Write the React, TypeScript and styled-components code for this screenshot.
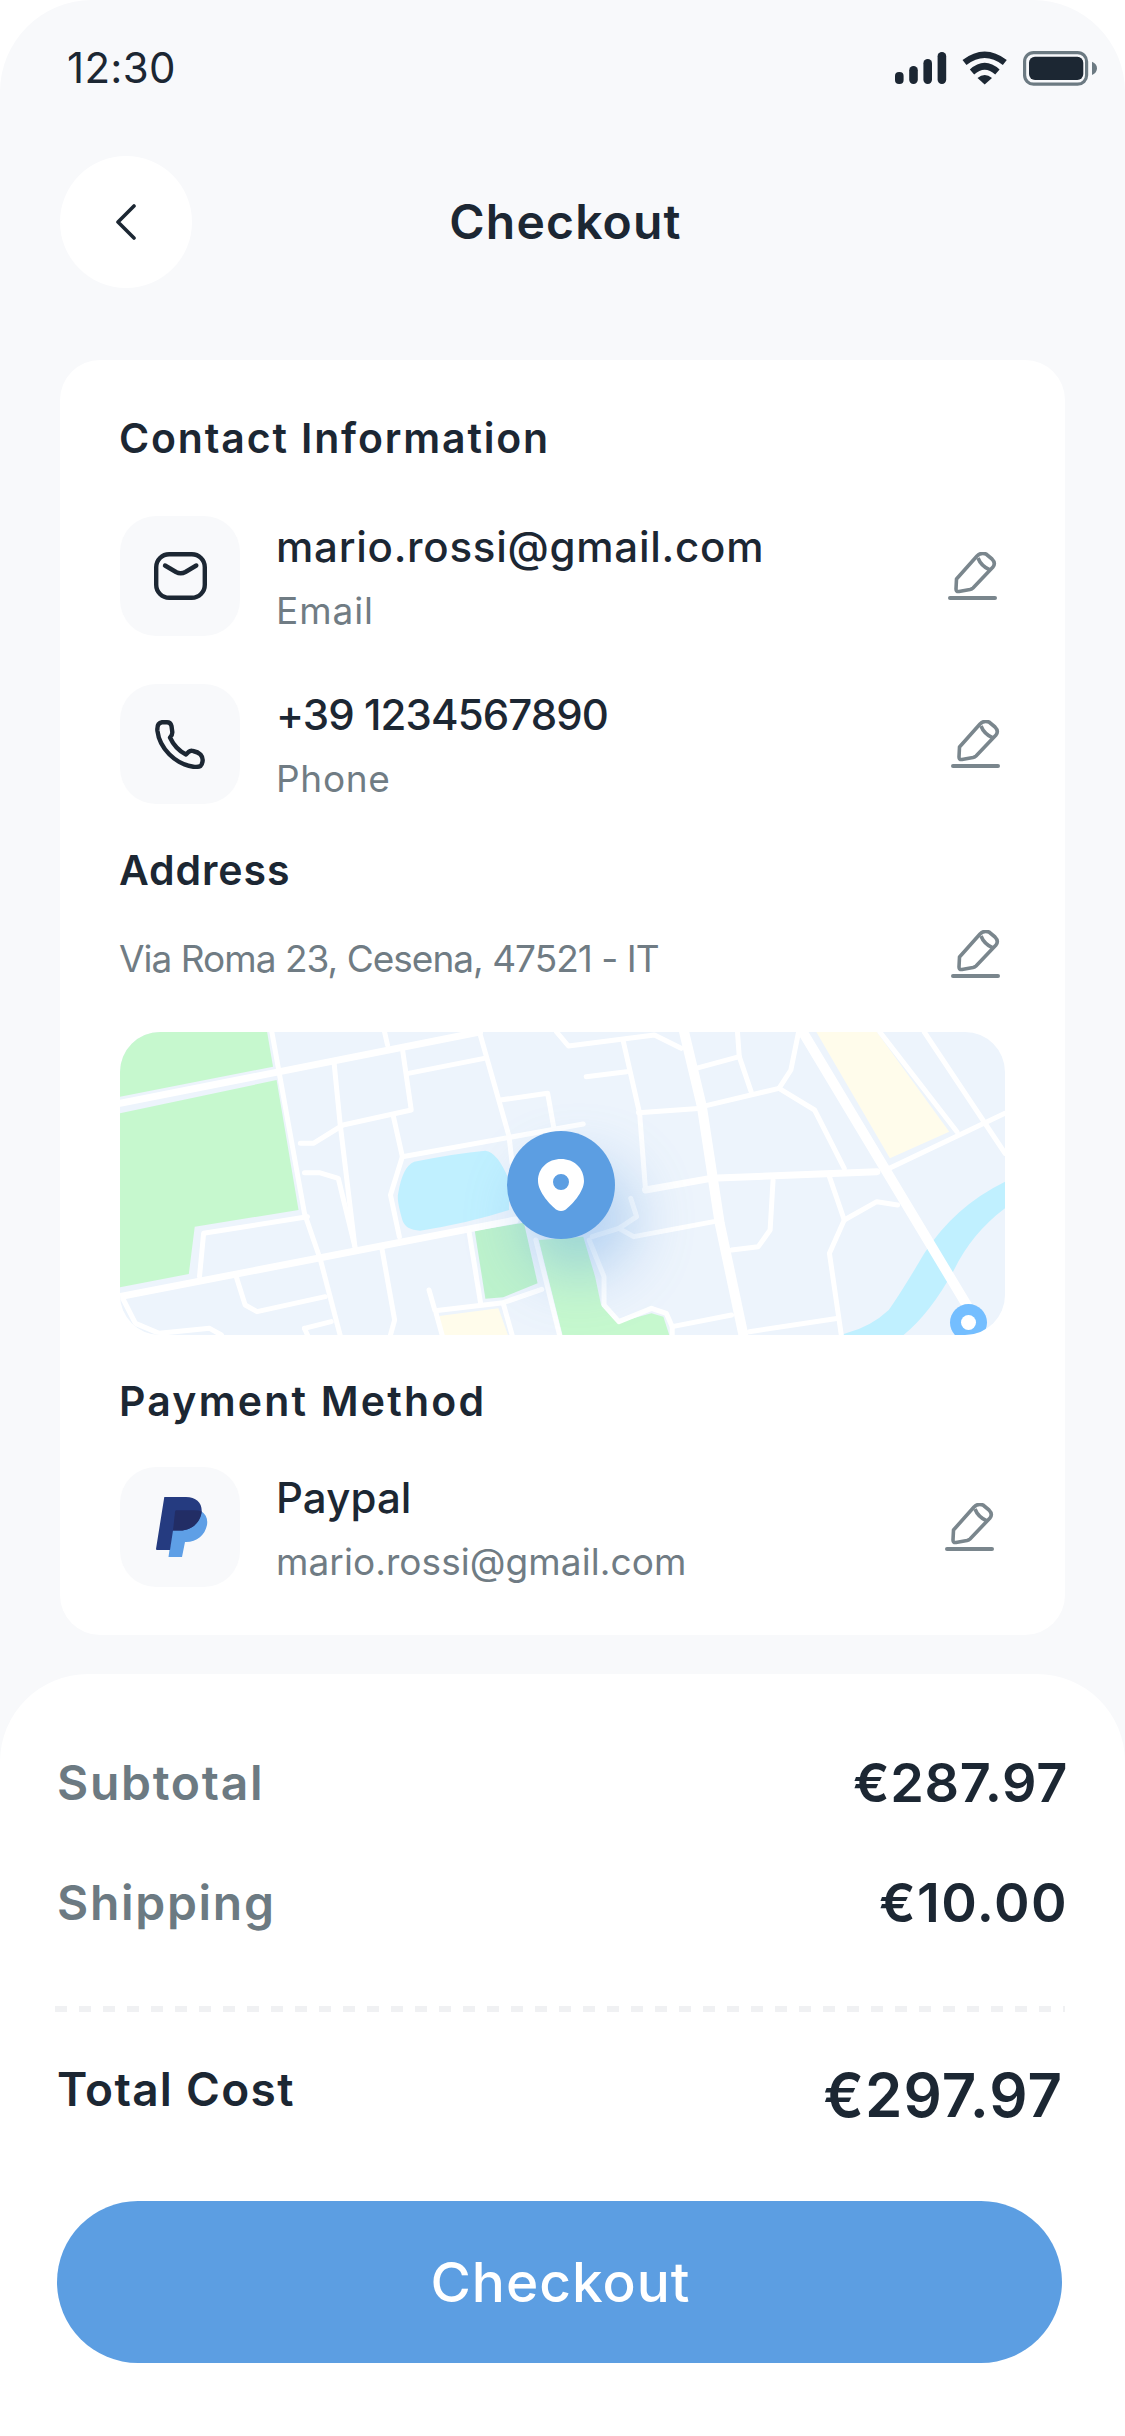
import { createGlobalStyle } from "styled-components";
import styled from "styled-components";

const dark = "#1C2733";
const grey = "#707C84";
const penGrey = "#7A868D";
const blue = "#5C9EE2";
const soft = "#F8F9FB";

const GlobalStyle = createGlobalStyle`
  html, body {
    margin: 0;
    padding: 0;
    background: #fff;
  }
  * {
    box-sizing: border-box;
  }
  body {
    font-family: Inter, "Liberation Sans", sans-serif;
  }
`;

const Screen = styled.div`
  width: 1125px;
  height: 2436px;
  background: ${soft};
  border-radius: 92px 92px 0 0;
  display: flex;
  flex-direction: column;
  overflow: hidden;
`;

const StatusBar = styled.div`
  height: 136px;
  flex: none;
  display: flex;
  align-items: center;
  justify-content: space-between;
  padding: 0 28px 0 67px;
`;

const Time = styled.span`
  font-size: 42px;
  line-height: 50px;
  color: ${dark};
  letter-spacing: 0.3px;
`;

const StatusIcons = styled.div`
  display: flex;
  align-items: center;
  gap: 15px;
`;

const Header = styled.div`
  margin-top: 20px;
  padding: 0 60px;
  display: grid;
  grid-template-columns: 132px 1fr 132px;
  align-items: center;
`;

const BackButton = styled.div`
  width: 132px;
  height: 132px;
  border-radius: 50%;
  background: #fff;
  display: flex;
  align-items: center;
  justify-content: center;
  padding-right: 1px;
`;

const Title = styled.h1`
  margin: 0;
  padding-left: 6px;
  text-align: center;
  font-size: 48px;
  line-height: 60px;
  font-weight: 600;
  color: ${dark};
  letter-spacing: 1.2px;
`;

const Card = styled.section`
  margin: 72px 60px 0;
  height: 1275px;
  flex: none;
  padding: 48px 60px 0;
  background: #fff;
  border-radius: 40px;
`;

const Heading = styled.h2<{ $top?: number; $track: number }>`
  margin: ${(p) => p.$top ?? 0}px 0 0 -1px;
  font-size: 41px;
  line-height: 60px;
  font-weight: 600;
  color: ${dark};
  letter-spacing: ${(p) => p.$track}px;
`;

const Row = styled.div<{ $top: number }>`
  margin-top: ${(p) => p.$top}px;
  height: 120px;
  display: flex;
  align-items: flex-start;
`;

const IconBox = styled.div`
  width: 120px;
  height: 120px;
  flex: none;
  border-radius: 36px;
  background: ${soft};
  display: flex;
  align-items: center;
  justify-content: center;
`;

const RowText = styled.div`
  margin-left: 36px;
  padding-top: 6px;
  flex: 1;
  display: flex;
  flex-direction: column;
  gap: 14px;
`;

const Name = styled.div<{ $track: number }>`
  font-size: 42px;
  line-height: 50px;
  font-weight: 500;
  color: ${dark};
  letter-spacing: ${(p) => p.$track}px;
`;

const Label = styled.div<{ $track: number }>`
  font-size: 37px;
  line-height: 50px;
  color: ${grey};
  letter-spacing: ${(p) => p.$track}px;
`;

const EditIcon = styled.svg<{ $right: number; $top: number }>`
  flex: none;
  width: 49px;
  height: 48px;
  margin: ${(p) => p.$top}px ${(p) => p.$right}px 0 0;
`;

const AddressRow = styled.div`
  margin-top: 29px;
  height: 60px;
  display: flex;
  align-items: center;
  justify-content: space-between;
`;

const AddressText = styled.div`
  margin-left: -1px;
  font-size: 37px;
  line-height: 50px;
  color: ${grey};
  letter-spacing: -0.98px;
`;

const MapBox = styled.div`
  position: relative;
  margin-top: 43px;
  height: 303px;
  border-radius: 40px;
  overflow: hidden;
  background: #edf4fc;
`;

const MapArt = styled.svg`
  display: block;
  width: 885px;
  height: 303px;
`;

const Pin = styled.div`
  position: absolute;
  left: 387px;
  top: 99px;
  width: 108px;
  height: 108px;
  border-radius: 50%;
  background: ${blue};
  display: flex;
  align-items: center;
  justify-content: center;
  box-shadow: 18px 34px 60px rgba(92, 158, 226, 0.42);
`;

const SmallPin = styled.div`
  position: absolute;
  left: 830px;
  top: 272px;
  width: 37px;
  height: 37px;
  border-radius: 50%;
  background: #74beff;
  display: flex;
  align-items: center;
  justify-content: center;
  &::after {
    content: "";
    width: 15px;
    height: 15px;
    border-radius: 50%;
    background: #fff;
  }
`;

const Sheet = styled.section`
  margin-top: 39px;
  flex: 1;
  padding: 79px 57px 0 57px;
  background: #fff;
  border-radius: 88px 88px 0 0;
`;

const SumRow = styled.div<{ $top?: number }>`
  margin-top: ${(p) => p.$top ?? 0}px;
  height: 60px;
  display: flex;
  align-items: center;
  justify-content: space-between;
`;

const SumLabel = styled.span`
  font-size: 48px;
  line-height: 60px;
  font-weight: 600;
  color: #6c7a82;
  letter-spacing: 1.7px;
`;

const SumValue = styled.span<{ $track: number }>`
  font-size: 54px;
  line-height: 60px;
  font-weight: 600;
  color: ${dark};
  letter-spacing: ${(p) => p.$track}px;
`;

const Divider = styled.div`
  margin-top: 73px;
  margin-left: -2px;
  margin-right: 3px;
  height: 6px;
  background: repeating-linear-gradient(90deg, #f0f1f3 0 12px, transparent 12px 24px);
`;

const TotalLabel = styled.span`
  font-size: 46px;
  line-height: 60px;
  font-weight: 600;
  color: ${dark};
  letter-spacing: 1.3px;
  margin-bottom: 6px;
`;

const TotalValue = styled.span`
  font-size: 60px;
  line-height: 60px;
  font-weight: 600;
  color: ${dark};
  letter-spacing: 1px;
  margin: 6px 5px 0 0;
`;

const CheckoutButton = styled.button`
  display: block;
  width: 1005px;
  height: 162px;
  margin-top: 79px;
  border: 0;
  border-radius: 81px;
  background: ${blue};
  color: #fff;
  font-family: inherit;
  font-size: 55px;
  font-weight: 500;
  letter-spacing: 1px;
  padding-right: 4px;
`;

const Signal = () => (
  <svg width="52" height="32" viewBox="0 0 52 32">
    <g fill={dark}>
      <rect x="0" y="20" width="8.6" height="12" rx="4" />
      <rect x="14.2" y="14" width="8.6" height="18" rx="4.2" />
      <rect x="28.4" y="7" width="8.6" height="25" rx="4.2" />
      <rect x="42.6" y="0" width="8.6" height="32" rx="4.2" />
    </g>
  </svg>
);

const Wifi = () => (
  <svg width="46" height="34" viewBox="0 0 46 34">
    <g fill="none" stroke={dark} strokeWidth="6.5">
      <path d="M2.5 11.5 Q22.7 -4 42.8 11.5" />
      <path d="M10 21 Q22.7 9.5 35.4 21" />
    </g>
    <path d="M22.7 33.5 L15.5 27 Q22.7 21 30 27 Z" fill={dark} />
  </svg>
);

const Battery = () => (
  <svg width="74" height="35" viewBox="0 0 74 35">
    <rect x="1.6" y="1.6" width="62" height="31.6" rx="9" fill="none" stroke="#6C7A82" strokeWidth="3.2" />
    <rect x="6" y="5.7" width="54.3" height="23.3" rx="6" fill={dark} />
    <path d="M69 10.7 Q74 13 74 17.3 Q74 22 69 24 Z" fill="#6C7A82" />
  </svg>
);

const BackIcon = () => (
  <svg width="22" height="36" viewBox="0 0 22 36" fill="none">
    <path d="M19 2 L3 18 L19 34" stroke={dark} strokeWidth="3.6" strokeLinecap="round" strokeLinejoin="round" />
  </svg>
);

const MailIcon = () => (
  <svg width="53" height="48" viewBox="0 0 53 48" fill="none">
    <rect x="2.2" y="2.2" width="48.6" height="43.6" rx="13" stroke={dark} strokeWidth="4.4" />
    <path
      d="M11 13.5 L22 20 Q26.7 22.5 31.4 20 L42.3 13.5"
      stroke={dark}
      strokeWidth="4.4"
      strokeLinecap="round"
      strokeLinejoin="round"
    />
  </svg>
);

const PhoneIcon = () => (
  <svg width="50" height="49" viewBox="0 0 50 49" fill="none">
    <path
      d="M7 2.3 H12 Q15.5 2.3 16.5 6 L17.3 12 Q17.5 15 15 17.5 C18 24 24 31 31 34.5 L33.5 32 Q35.5 30.3 38 31 Q43 32 45.5 34.5 Q47.7 37 47.7 40 Q47.5 44 45.5 46 Q43 47.3 38.3 46.7 C20 44 4.5 28 2.4 10.7 Q1.8 3 7 2.3 Z"
      stroke={dark}
      strokeWidth="4.4"
      strokeLinejoin="round"
    />
  </svg>
);

const Pen = ({ right, top }: { right: number; top: number }) => (
  <EditIcon $right={right} $top={top} viewBox="0 0 49 48" fill="none">
    <path
      d="M8.5 27 L29 4 Q33 0 38 2 L44 7 Q48 11 45 15 L25 36 Q24 37 22 37.5 L11 39.5 Q8 40 8 37 Z"
      stroke={penGrey}
      strokeWidth="3.6"
      strokeLinejoin="round"
    />
    <path d="M30 6 Q33 14 42 18" stroke={penGrey} strokeWidth="3.6" />
    <path d="M2 46 H47" stroke={penGrey} strokeWidth="4" strokeLinecap="round" />
  </EditIcon>
);

const PaypalMark = styled.svg`
  width: 52px;
  height: 60px;
  margin-left: 3px;
`;

const PaypalLogo = () => (
  <PaypalMark viewBox="0 0 52 60">
    <path d="M45 14 C50 17 52 22 51 28 C49 38 41 45 30 45 H29 L26 60 H12.5 L19 13 Z" fill="#5E9FE6" />
    <path d="M8.3 0 H30 C40 0 46 6 45.7 14 C45 25 36 33.5 24 33.5 H17 L14 53 H1 Q0 53 0 52 Z" fill="#253B80" />
    <path d="M20 13.3 H38 Q43 13.3 45.6 14.5 C44.5 25 36 33.5 24 33.5 H17 L19 15 Q19.2 13.3 20 13.3 Z" fill="#222D65" />
  </PaypalMark>
);

const roads = [
  "M290 36 L345 580 L372 720 L405 945",
  "M510 85 L525 270 L410 315 L360 370 L338 370",
  "M395 130 L405 310 L430 680",
  "M520 160 L648 115",
  "M640 36 L690 350 L695 430",
  "M480 36 L485 75",
  "M675 240 L755 220 L765 320",
  "M495 290 L510 410 L490 525 L505 650",
  "M510 410 L815 312",
  "M345 458 L370 458 L402 475 L430 680",
  "M168 770 L175 640 L350 590",
  "M230 770 L245 855 L265 875 L380 830",
  "M475 680 L497 900 L490 945",
  "M622 630 L642 850",
  "M555 810 L565 872 L680 848 L745 808",
  "M567 880 L577 945",
  "M680 850 L695 945",
  "M735 660 L775 945",
  "M825 660 L850 770 L850 855 L875 905 L930 865 L955 880 L965 920 L1065 885",
  "M965 920 L965 945",
  "M770 36 L790 78 L935 45 L980 85",
  "M882 60 L910 280 L920 510",
  "M820 170 L888 155",
  "M1005 145 L1078 110 L1098 215",
  "M1075 36 L1078 110",
  "M1015 260 L1145 205 L1165 150 L1178 36",
  "M1145 205 L1205 270 L1255 445",
  "M908 278 L1015 265",
  "M1315 36 L1445 335",
  "M1390 36 L1526 400",
  "M1135 480 L1130 630 L1110 680 L1065 690",
  "M1230 470 L1255 600 L1230 700 L1250 945",
  "M1255 600 L1310 545 L1345 555",
  "M1095 935 L1245 895",
  "M895 535 L905 590 L875 625 L900 650 L1035 605",
  "M830 650 L875 625",
  "M345 925 L390 905",
  "M345 925 L350 945",
  "M40 840 L60 910 L100 940 L185 925 L205 945",
  "M1325 450 L1526 280",
];

const wideRoads = [
  "M34 250 L640 36",
  "M34 830 L700 600",
  "M920 510 L1030 475 L1310 455",
];

const mainRoads = [
  "M985 36 L1015 260 L1045 610 L1085 945",
  "M1185 36 L1470 880",
];

const CityMap = () => (
  <MapArt viewBox="34 36 1492 909" preserveAspectRatio="none">
    <g fill="#C6F8CE">
      <path d="M34 36 H282 L292 140 L34 230 Z" />
      <path d="M34 280 L298 180 L335 570 L160 620 L150 762 L34 802 Z" />
      <path d="M740 660 L815 650 L835 770 L845 855 L878 905 L930 880 L950 890 L960 945 H780 Z" />
    </g>
    <path d="M632 632 L715 608 L738 790 L680 832 L650 836 Z" fill="#BDF2CC" />
    <g fill="#C0F0FF">
      <path d="M530 425 Q600 400 650 392 Q670 395 690 480 L690 570 Q620 610 540 632 Q515 630 510 600 Q500 540 503 520 Q510 440 530 425 Z" />
      <path d="M1526 485 Q1440 560 1390 700 Q1350 820 1330 870 Q1300 920 1258 940 L1250 945 H1355 Q1400 880 1440 750 Q1470 640 1526 565 Z" />
    </g>
    <g fill="#FFFCEB">
      <path d="M1208 36 H1310 L1432 335 L1332 415 Z" />
      <path d="M572 888 L672 865 L688 945 H578 Z" />
    </g>
    <g fill="none" stroke="#fff" strokeLinejoin="round" strokeLinecap="round">
      {roads.map((d) => (
        <path key={d} d={d} strokeWidth="5" vectorEffect="non-scaling-stroke" />
      ))}
      {wideRoads.map((d) => (
        <path key={d} d={d} strokeWidth="7" vectorEffect="non-scaling-stroke" />
      ))}
      {mainRoads.map((d) => (
        <path key={d} d={d} strokeWidth="10" vectorEffect="non-scaling-stroke" />
      ))}
    </g>
  </MapArt>
);

const PinGlyph = () => (
  <svg width="46" height="52" viewBox="0 0 46 52">
    <path
      fillRule="evenodd"
      d="M23 0 C36 0 46 9 46 22 C46 33 33 47 27 51 Q23 53 19 51 C13 47 0 33 0 22 C0 9 10 0 23 0 Z M23 15 A8 8 0 1 0 23.01 31 A8 8 0 1 0 23 15 Z"
      fill="#fff"
    />
  </svg>
);

const App = () => {
  return (
    <Screen>
      <GlobalStyle />
      <StatusBar>
        <Time>12:30</Time>
        <StatusIcons>
          <Signal />
          <Wifi />
          <Battery />
        </StatusIcons>
      </StatusBar>
      <Header>
        <BackButton>
          <BackIcon />
        </BackButton>
        <Title>Checkout</Title>
      </Header>
      <Card>
        <Heading $track={1.85}>Contact Information</Heading>
        <Row $top={48}>
          <IconBox>
            <MailIcon />
          </IconBox>
          <RowText>
            <Name $track={0.75}>mario.rossi@gmail.com</Name>
            <Label $track={0.9}>Email</Label>
          </RowText>
          <Pen right={8} top={36} />
        </Row>
        <Row $top={48}>
          <IconBox>
            <PhoneIcon />
          </IconBox>
          <RowText>
            <Name $track={-0.9}>+39 1234567890</Name>
            <Label $track={0.7}>Phone</Label>
          </RowText>
          <Pen right={5} top={36} />
        </Row>
        <Heading $top={36} $track={0.9}>Address</Heading>
        <AddressRow>
          <AddressText>Via Roma 23, Cesena, 47521 - IT</AddressText>
          <Pen right={5} top={-10} />
        </AddressRow>
        <MapBox>
          <CityMap />
          <Pin>
            <PinGlyph />
          </Pin>
          <SmallPin />
        </MapBox>
        <Heading $top={36} $track={2.2}>Payment Method</Heading>
        <Row $top={36}>
          <IconBox>
            <PaypalLogo />
          </IconBox>
          <RowText>
            <Name $track={0.1}>Paypal</Name>
            <Label $track={0.07}>mario.rossi@gmail.com</Label>
          </RowText>
          <Pen right={11} top={36} />
        </Row>
      </Card>
      <Sheet>
        <SumRow>
          <SumLabel>Subtotal</SumLabel>
          <SumValue $track={0.65}>€287.97</SumValue>
        </SumRow>
        <SumRow $top={60}>
          <SumLabel>Shipping</SumLabel>
          <SumValue $track={1.4}>€10.00</SumValue>
        </SumRow>
        <Divider />
        <SumRow $top={50}>
          <TotalLabel>Total Cost</TotalLabel>
          <TotalValue>€297.97</TotalValue>
        </SumRow>
        <CheckoutButton>Checkout</CheckoutButton>
      </Sheet>
    </Screen>
  );
};

export default App;
